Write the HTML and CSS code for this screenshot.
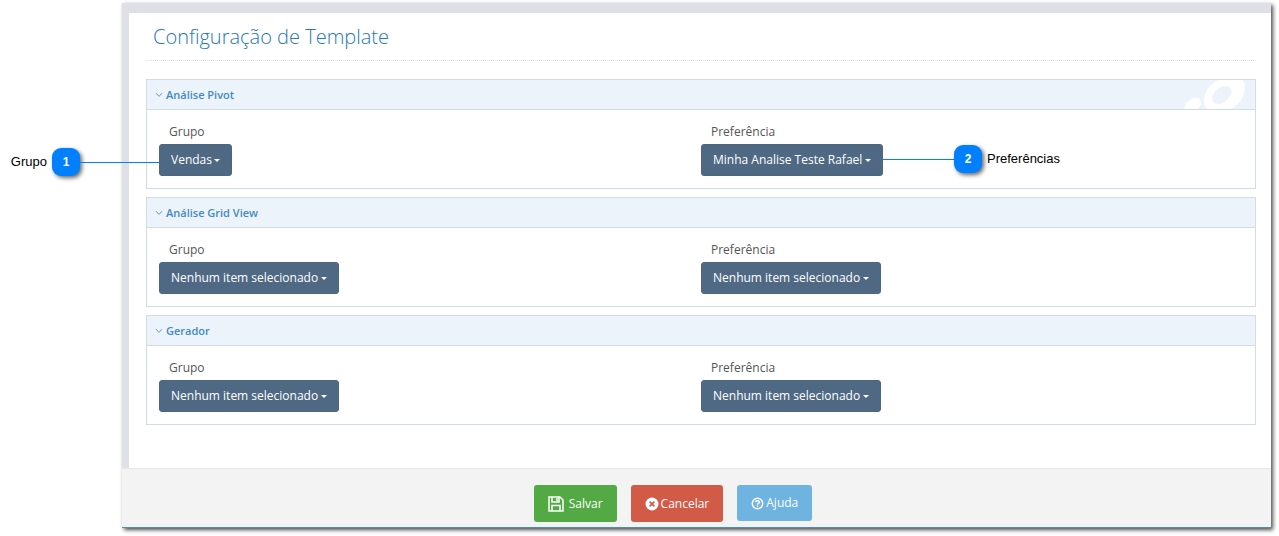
FILE: index.html
```
<!DOCTYPE html>
<html lang="pt-BR">
<head>
<meta charset="utf-8">
<title>Configuração de Template</title>
<link rel="stylesheet" href="styles.css">
</head>
<body>
<div class="window">
  <main class="content">
    <h1 class="title">Configuração de Template</h1>

    <section class="panel">
      <h2 class="panel-head">
        <svg class="chevron" viewBox="0 0 8 6"><path d="M1 1.2 4 4.4 7 1.2"/></svg>
        Análise Pivot
        <svg class="ornament" viewBox="0 0 64 29"><path d="M0 29C2 22 8 17 13 18C18 19 18 25 14 29Z"/><path fill-rule="evenodd" d="M37-1C26 3 20 12 20 20C20 25 22 28 24 30H45C54 26 61 17 61 8C61 3 59 0 56-2ZM41 6C47 6 49 11 46 16C43 21 38 25 33 24C28 23 27 18 30 13C33 9 37 6 41 6Z"/></svg>
      </h2>
      <div class="panel-body">
        <div class="field">
          <label class="label" for="g1">Grupo</label>
          <div class="control">
            <select class="select" id="g1"><option>Vendas</option></select>
            <div class="callout callout-left"><span>Grupo</span><b class="badge">1</b><i class="line"></i></div>
          </div>
        </div>
        <div class="field">
          <label class="label" for="p1">Preferência</label>
          <div class="control">
            <select class="select" id="p1"><option>Minha Analise Teste Rafael</option></select>
            <div class="callout callout-right"><i class="line"></i><b class="badge">2</b><span>Preferências</span></div>
          </div>
        </div>
      </div>
    </section>

    <section class="panel">
      <h2 class="panel-head">
        <svg class="chevron" viewBox="0 0 8 6"><path d="M1 1.2 4 4.4 7 1.2"/></svg>
        Análise Grid View
      </h2>
      <div class="panel-body">
        <div class="field">
          <label class="label" for="g2">Grupo</label>
          <div class="control"><select class="select" id="g2"><option>Nenhum item selecionado</option></select></div>
        </div>
        <div class="field">
          <label class="label" for="p2">Preferência</label>
          <div class="control"><select class="select" id="p2"><option>Nenhum item selecionado</option></select></div>
        </div>
      </div>
    </section>

    <section class="panel">
      <h2 class="panel-head">
        <svg class="chevron" viewBox="0 0 8 6"><path d="M1 1.2 4 4.4 7 1.2"/></svg>
        Gerador
      </h2>
      <div class="panel-body">
        <div class="field">
          <label class="label" for="g3">Grupo</label>
          <div class="control"><select class="select" id="g3"><option>Nenhum item selecionado</option></select></div>
        </div>
        <div class="field">
          <label class="label" for="p3">Preferência</label>
          <div class="control"><select class="select" id="p3"><option>Nenhum item selecionado</option></select></div>
        </div>
      </div>
    </section>
  </main>

  <footer class="footer">
    <button class="btn btn-save" type="button">
      <svg class="icon-save" viewBox="0 0 16 16" fill="none" stroke="#fff" stroke-width="1.5"><path d="M1 1H12L15 4V15H1Z"/><path d="M4 1V6H11V1M4 15V9.5H12V15"/><path d="M9 2V5"/></svg>
      Salvar
    </button>
    <button class="btn btn-cancel" type="button">
      <svg class="icon" viewBox="0 0 14 14"><circle cx="7" cy="7" r="6.5" fill="#fff"/><path d="M4.6 4.6 9.4 9.4M9.4 4.6 4.6 9.4" stroke="#d15b47" stroke-width="1.6"/></svg>
      Cancelar
    </button>
    <button class="btn btn-help" type="button">
      <svg class="icon icon-help" viewBox="0 0 14 14" fill="none" stroke="#fff" stroke-width="1.6"><circle cx="7" cy="7" r="5.6"/><path d="M4.8 5.6C5 3.6 9.3 3.7 9.1 5.8C9 7 7.1 6.8 7 8.3M7 9.2V10.6"/></svg>
      Ajuda
    </button>
  </footer>
</div>
</body>
</html>
```

FILE: styles.css
```
* { box-sizing: border-box; }

body {
  margin: 0;
  padding: 3px 8px 8px 122px;
  background: #fff;
  color: #555;
  font: 12px/18px "Open Sans", sans-serif;
}

.window {
  border-bottom: 1px solid #4a8fb5;
  box-shadow: 2px 2px 4px rgba(0, 0, 0, 0.7);
}

.content {
  padding: 9px 15px 35px 17px;
  border-top: 10px solid #dfe0e6;
  border-left: 7px solid #dfe0e6;
  background: #fff;
}

.title {
  margin: 0 0 18px;
  padding: 0 7px 8px;
  border-bottom: 1px dotted #ddd;
  color: #2679b5;
  font-size: 20px;
  font-weight: 300;
  line-height: 30px;
}

.panel {
  margin-bottom: 8px;
  border: 1px solid #d0dde8;
}

.panel-head {
  position: relative;
  display: flex;
  align-items: center;
  gap: 3px;
  margin: 0;
  padding: 0 8px;
  height: 30px;
  border-bottom: 1px solid #d0dde8;
  background: #edf3fa;
  color: #428bbf;
  font-size: 11px;
  font-weight: 600;
}

.chevron {
  width: 8px;
  height: 6px;
  fill: none;
  stroke: #5b98c5;
}

.ornament {
  position: absolute;
  top: 0;
  right: 7px;
  width: 64px;
  height: 29px;
  fill: #fff;
}

.panel-body {
  display: grid;
  grid-template-columns: 1fr 1fr;
  padding: 13px 12px 12px;
}

.label {
  display: block;
  margin: 0 10px 3px;
}

.control {
  position: relative;
  width: fit-content;
}

.control::after {
  content: "";
  position: absolute;
  top: 15px;
  right: 12px;
  border: 3px solid transparent;
  border-top-color: #fff;
  border-bottom: 0;
  pointer-events: none;
}

.select {
  display: block;
  appearance: none;
  height: 32px;
  padding: 0 19px 0 11px;
  border: 1px solid #4d6781;
  border-radius: 3px;
  background: #4f6984;
  color: #fff;
  font: 12px/18px "Open Sans", sans-serif;
}

.callout {
  position: absolute;
  display: flex;
  align-items: center;
  gap: 5px;
  color: #000;
  font: 12px/16px "Liberation Sans", Arial, sans-serif;
  font-size: 13px;
}

.callout-left {
  top: 4px;
  right: 100%;
}

.callout-right {
  top: 1px;
  left: 100%;
}

.badge {
  width: 28px;
  height: 28px;
  border-radius: 9px;
  background: #0080ff;
  box-shadow: 2px 2px 4px rgba(0, 0, 0, 0.6);
  color: #fff;
  font-size: 12px;
  line-height: 28px;
  text-align: center;
}

.line {
  height: 1px;
  background: #0080ff;
}

.callout-left .line {
  width: 79px;
  margin-left: -5px;
}

.callout-right .line {
  width: 71px;
  margin-right: -5px;
}

.footer {
  display: flex;
  justify-content: center;
  align-items: flex-start;
  gap: 14px;
  padding: 16px 47px 5px 0;
  border-top: 1px solid #e8e8e8;
  background: #f3f3f3;
}

.btn {
  display: flex;
  align-items: center;
  gap: 2px;
  height: 37px;
  padding: 0 14px;
  border: 0;
  border-radius: 3px;
  color: #fff;
  font: 12px/18px "Open Sans", sans-serif;
}

.btn-save {
  gap: 5px;
  background: #53a943;
}

.btn-cancel {
  background: #d15b47;
}

.btn-help {
  height: 36px;
  background: #6fb3e0;
}

.icon {
  width: 14px;
  height: 14px;
}

.icon-help {
  width: 13px;
  height: 13px;
}

.icon-save {
  width: 16px;
  height: 16px;
}
```
